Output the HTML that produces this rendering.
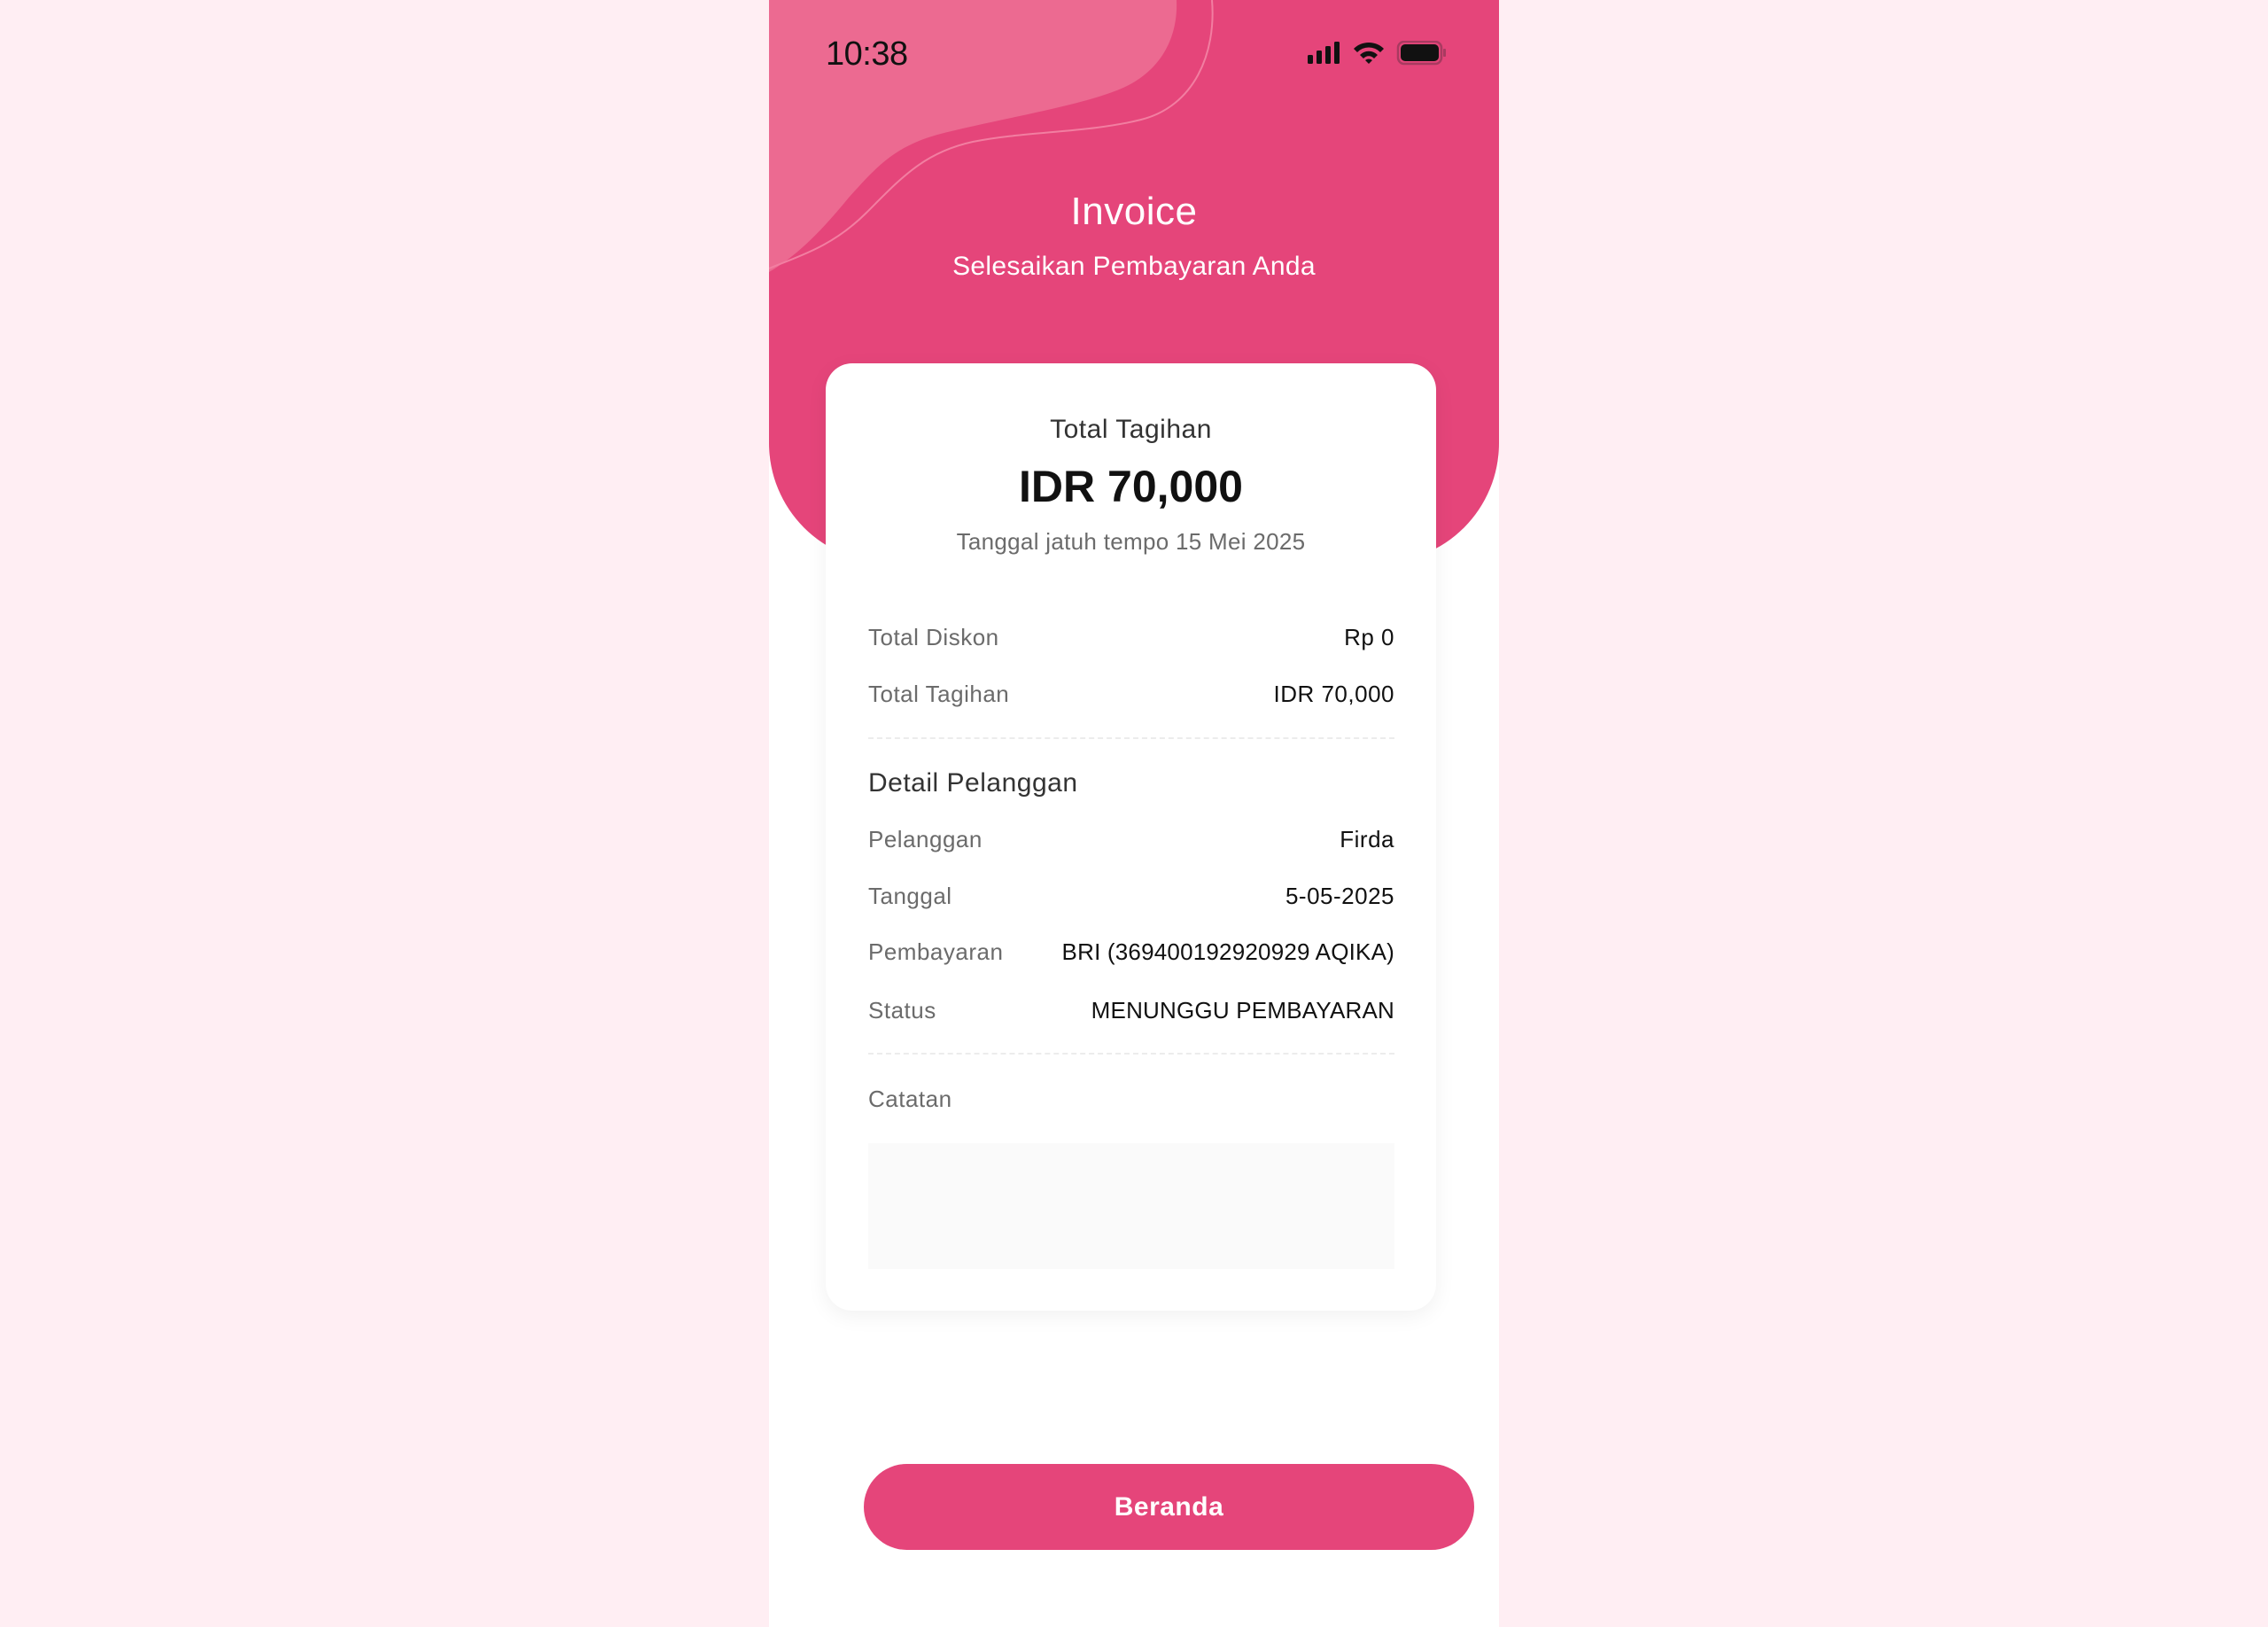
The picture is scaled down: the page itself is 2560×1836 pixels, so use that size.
<!DOCTYPE html>
<html><head><meta charset="utf-8">
<style>
*{margin:0;padding:0;box-sizing:border-box}
body{width:2560px;height:1836px;background:#FFEEF3;position:relative;overflow:hidden;font-family:"Liberation Sans",sans-serif}
.phone{position:absolute;left:868px;top:0;width:824px;height:1836px;background:#fff;overflow:hidden}
.header{position:absolute;left:0;top:0;width:824px;height:635px;background:#E5457A;border-radius:0 0 135px 135px;overflow:hidden}
.abs{position:absolute}
.time{left:64px;top:40px;font-size:38px;color:#111;letter-spacing:-0.5px}
.title{left:0;width:824px;text-align:center;top:214px;font-size:44px;color:#fff;letter-spacing:0.5px}
.sub{left:0;width:824px;text-align:center;top:284px;font-size:30px;color:#fff;letter-spacing:0.3px}
.card{position:absolute;left:64px;top:410px;width:689px;height:1069px;background:#fff;border-radius:30px;box-shadow:0 6px 24px rgba(0,0,0,0.06)}
.c{position:absolute;left:0;width:689px;text-align:center}
.row{position:absolute;left:48px;width:594px;font-size:26px;letter-spacing:0.5px}
.row .l{color:#6b6b6b;position:absolute;left:0}
.row .r{color:#111;position:absolute;right:0}
.dash{position:absolute;left:48px;width:594px;border-top:2px dashed #ececec}
.btn{position:absolute;left:975px;top:1652px;width:689px;height:97px;background:#E5457A;border-radius:49px;color:#fff;font-size:30px;font-weight:bold;text-align:center;line-height:97px;letter-spacing:0.5px}
</style></head><body>
<div class="phone">
 <div class="header">
  <svg class="abs" style="left:0;top:0" width="824" height="635">
   <path d="M0,0 L460,0 C462,45 440,85 390,103 C340,122 250,136 190,152 C140,166 120,190 90,223 C60,260 30,290 0,307 Z" fill="#EC6A91"/>
   <path d="M500,0 C505,60 480,120 420,135 C360,150 290,148 230,160 C175,172 150,200 110,240 C70,280 30,290 0,303" fill="none" stroke="#F27EA1" stroke-width="2"/>
  </svg>
  <div class="abs time">10:38</div>
  <svg class="abs" style="left:608px;top:46px" width="160" height="30">
   <rect x="0" y="16" width="6" height="10" rx="1.5" fill="#111"/>
   <rect x="10" y="11" width="6" height="15" rx="1.5" fill="#111"/>
   <rect x="20" y="6" width="6" height="20" rx="1.5" fill="#111"/>
   <rect x="30" y="1" width="6" height="25" rx="1.5" fill="#111"/>
   <path d="M52,9 A24,24 0 0 1 86,9 L82,13 A18,18 0 0 0 56,13 Z" fill="#111"/>
   <path d="M59,16 A14,14 0 0 1 79,16 L75,20 A8,8 0 0 0 63,20 Z" fill="#111"/>
   <path d="M65,22 L69,26 L73,22 A6,6 0 0 0 65,22 Z" fill="#111"/>
   <rect x="102" y="1" width="49" height="25" rx="7" fill="none" stroke="#A83A60" stroke-width="2.5"/>
   <rect x="105" y="4" width="43" height="19" rx="5" fill="#111"/>
   <rect x="153" y="9" width="3" height="9" rx="1" fill="#A83A60"/>
  </svg>
  <div class="abs title">Invoice</div>
  <div class="abs sub">Selesaikan Pembayaran Anda</div>
 </div>
 <div class="card">
  <div class="c" style="top:58px;font-size:30px;color:#333;letter-spacing:0.5px">Total Tagihan</div>
  <div class="c" style="top:110px;font-size:50px;color:#111;font-weight:bold">IDR 70,000</div>
  <div class="c" style="top:186px;font-size:26px;color:#6b6b6b;letter-spacing:0.3px">Tanggal jatuh tempo 15 Mei 2025</div>
  <div class="row" style="top:294px"><span class="l">Total Diskon</span><span class="r">Rp 0</span></div>
  <div class="row" style="top:358px"><span class="l">Total Tagihan</span><span class="r">IDR 70,000</span></div>
  <div class="dash" style="top:422px"></div>
  <div class="row" style="top:457px;font-size:30px"><span style="color:#333">Detail Pelanggan</span></div>
  <div class="row" style="top:522px"><span class="l">Pelanggan</span><span class="r">Firda</span></div>
  <div class="row" style="top:586px"><span class="l">Tanggal</span><span class="r">5-05-2025</span></div>
  <div class="row" style="top:649px;letter-spacing:0.2px"><span class="l" style="letter-spacing:0.5px">Pembayaran</span><span class="r">BRI (369400192920929 AQIKA)</span></div>
  <div class="row" style="top:715px"><span class="l">Status</span><span class="r" style="letter-spacing:0.2px">MENUNGGU PEMBAYARAN</span></div>
  <div class="dash" style="top:778px"></div>
  <div class="row" style="top:815px"><span class="l">Catatan</span></div>
  <div style="position:absolute;left:48px;top:880px;width:594px;height:142px;background:#FAFAFA"></div>
 </div>
</div>
<div class="btn">Beranda</div>
</body></html>
